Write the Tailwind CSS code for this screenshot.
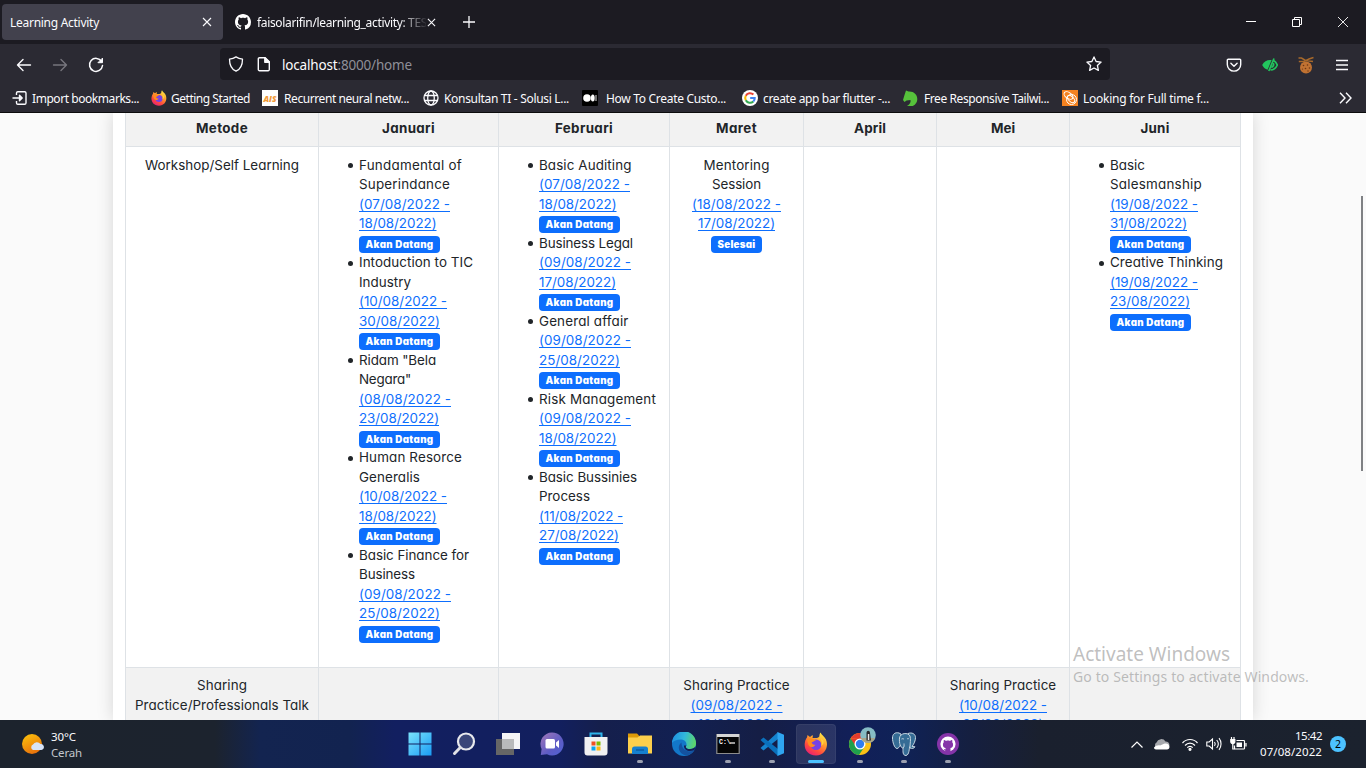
<!DOCTYPE html>
<html lang="id">
<head>
<meta charset="utf-8">
<title>Learning Activity</title>
<script src="https://cdn.jsdelivr.net/npm/@tailwindcss/browser@4"></script>
</head>
<body class="w-[1366px] h-[768px] overflow-hidden flex flex-col bg-[#fafafa] font-['Noto_Sans','Open_Sans',sans-serif] text-[12px] text-[#fbfbfe] whitespace-nowrap">

<!-- tab strip -->
<header class="h-[44px] shrink-0 bg-[#1c1b22] flex items-start pl-[2px]">
  <div class="mt-[4px] w-[221px] h-[36px] rounded-[4px] bg-[#42414d] flex items-center pl-[8px] pr-[11px] justify-between">
    <span class="pt-[1px]" data-w="89">Learning Activity</span>
    <svg class="w-[10px] h-[10px]" viewBox="0 0 10 10" stroke="#fbfbfe" stroke-width="1.1"><path d="M1 1l8 8M9 1l-8 8"/></svg>
  </div>
  <div class="mt-[4px] h-[36px] w-[214px] flex items-center pl-[12px]">
    <svg class="w-[16px] h-[16px] shrink-0" viewBox="0 0 16 16" fill="#fff"><path d="M8 0C3.58 0 0 3.58 0 8c0 3.54 2.29 6.53 5.47 7.59.4.07.55-.17.55-.38 0-.19-.01-.82-.01-1.49-2.01.37-2.53-.49-2.69-.94-.09-.23-.48-.94-.82-1.13-.28-.15-.68-.52-.01-.53.63-.01 1.08.58 1.23.82.72 1.21 1.87.87 2.33.66.07-.52.28-.87.51-1.07-1.78-.2-3.64-.89-3.64-3.95 0-.87.31-1.59.82-2.15-.08-.2-.36-1.02.08-2.12 0 0 .67-.21 2.2.82.64-.18 1.32-.27 2-.27s1.36.09 2 .27c1.53-1.04 2.2-.82 2.2-.82.44 1.1.16 1.92.08 2.12.51.56.82 1.27.82 2.15 0 3.07-1.87 3.75-3.65 3.95.29.25.54.73.54 1.48 0 1.07-.01 1.93-.01 2.2 0 .21.15.46.55.38A8.01 8.01 0 0 0 16 8c0-4.42-3.58-8-8-8z"/></svg>
    <div class="ml-[6px] pt-[1px] w-[169px] overflow-hidden [mask-image:linear-gradient(to_right,#000_142px,transparent_171px)]"><span data-w="170">faisolarifin/learning_activity: TES</span></div>
    <svg class="ml-[1px] w-[9px] h-[9px] shrink-0" viewBox="0 0 10 10" stroke="#fbfbfe" stroke-width="1.2"><path d="M1 1l8 8M9 1l-8 8"/></svg>
  </div>
  <svg class="ml-[26px] mt-[16px] w-[12px] h-[12px]" viewBox="0 0 12 12" stroke="#fbfbfe" stroke-width="1.3"><path d="M6 0v12M0 6h12"/></svg>
  <div class="ml-auto flex items-center h-[44px] pr-[18px] gap-[36px]">
    <svg class="w-[10px] h-[10px]" viewBox="0 0 10 10"><path d="M0 4.5h10" stroke="#fff"/></svg>
    <svg class="w-[10px] h-[10px]" viewBox="0 0 10 10" fill="none" stroke="#fff"><path d="M.5 2.5h7v7h-7zM2.5 2.5v-2h7v7h-2"/></svg>
    <svg class="w-[10px] h-[10px]" viewBox="0 0 10 10" stroke="#fff" stroke-width=".9"><path d="M0 0l10 10M10 0L0 10"/></svg>
  </div>
</header>

<!-- navigation bar -->
<div class="h-[40px] shrink-0 bg-[#2b2a33] flex items-start">
  <svg class="ml-[16px] mt-[13px] w-[16px] h-[16px]" viewBox="0 0 16 16" fill="none" stroke="#fbfbfe" stroke-width="1.4" stroke-linecap="round" stroke-linejoin="round"><path d="M14.500 8H1.500M7 2.500L1.500 8 7 13.500"/></svg>
  <svg class="ml-[20px] mt-[13px] w-[16px] h-[16px]" viewBox="0 0 16 16" fill="none" stroke="#77767e" stroke-width="1.4" stroke-linecap="round" stroke-linejoin="round"><path d="M1.500 8h13M9 2.500L14.500 8 9 13.500"/></svg>
  <svg class="ml-[20px] mt-[13px] w-[16px] h-[16px]" viewBox="0 0 16 16" fill="none" stroke="#fbfbfe" stroke-width="1.5" stroke-linecap="round"><path d="M13.600 4.500A6.500 6.500 0 1 0 14.500 8.500"/><path d="M14.500 1.500v4.200h-4.200z" fill="#fbfbfe" stroke-width="1"/></svg>
  <div class="ml-[116px] mt-[4px] w-[890px] h-[32px] rounded-[4px] bg-[#1c1b22] flex items-center pl-[8px] pr-[8px]">
    <svg class="w-[16px] h-[16px]" viewBox="0 0 16 16" fill="none" stroke="#fbfbfe" stroke-width="1.3" stroke-linejoin="round"><path d="M8 .9c2 1.300 4.300 2 6.500 2.300C14.500 9 12.500 13.200 8 15.200 3.500 13.200 1.500 9 1.500 3.200 3.700 2.900 6 2.200 8 .9z"/></svg>
    <svg class="ml-[12px] w-[16px] h-[16px]" viewBox="0 0 16 16" fill="none" stroke="#fbfbfe" stroke-width="1.4" stroke-linejoin="round"><path d="M3.500 1.700h5.700l4.100 4.100v7.700a1.200 1.200 0 0 1-1.200 1.200H3.500a1.200 1.200 0 0 1-1.200-1.200V2.900a1.200 1.200 0 0 1 1.200-1.200z"/><path d="M8.800 1.700v4.500h4.500z" fill="#fbfbfe"/></svg>
    <span class="ml-[10px] pt-[2px] text-[13.500px]" data-w="130">localhost<span class="text-[#8f8f98]">:8000/home</span></span>
    <svg class="ml-auto w-[16px] h-[16px]" viewBox="0 0 16 16" fill="none" stroke="#fbfbfe" stroke-width="1.3" stroke-linejoin="round"><path d="M8 .9l2.100 4.600 5 .6-3.700 3.400 1 4.900L8 12l-4.400 2.400 1-4.900L.9 6.100l5-.6z"/></svg>
  </div>
  <div class="ml-auto mt-[12px] flex items-center pr-[18px]">
    <svg class="w-[16px] h-[16px]" viewBox="0 0 16 16" fill="none" stroke="#fbfbfe" stroke-width="1.400" stroke-linecap="round" stroke-linejoin="round"><path d="M2.200 2.200h11.600a.9.9 0 0 1 .9.900v4.300a6.700 6.700 0 0 1-13.400 0V3.100a.9.9 0 0 1 .9-.9z"/><path d="M4.900 6.200L8 9.200l3.100-3"/></svg>
    <svg class="ml-[20px] w-[16px] h-[16px]" viewBox="0 0 16 16" fill="none" stroke="#22c55e" stroke-width="1.700"><path d="M.2 8c2-4 5.300-5.400 9.400-4.900L5.600 12.800C3 12 1.200 10.300.2 8z" fill="#22c55e" stroke="none"/><path d="M12 1.500L6.800 14M12 3.800c1.500.8 2.500 2.300 3.300 4.200-1.600 3.400-4 4.900-6.800 5"/><path d="M11.300 6c.8 2 0 3.500-2 4.500"/></svg>
    <svg class="ml-[20px] w-[16px] h-[18px]" viewBox="0 0 16 18"><circle cx="8" cy="11.500" r="6" fill="#c07232"/><g fill="#6d3513"><circle cx="5.500" cy="9.500" r=".8"/><circle cx="9.500" cy="9" r=".8"/><circle cx="11.500" cy="12" r=".8"/><circle cx="7.500" cy="12.500" r=".8"/><circle cx="10" cy="15" r=".7"/><circle cx="4.500" cy="13" r=".6"/></g><path d="M.5 2h3l4 2.500 7.500 1M15.500 1.500L11 3 6 5.500H.8" stroke="#a8692b" stroke-width="1.500" fill="none"/></svg>
    <svg class="ml-[22px] w-[12px] h-[12px]" viewBox="0 0 12 12" stroke="#fbfbfe" stroke-width="1.300"><path d="M0 1.500h12M0 6h12M0 10.500h12"/></svg>
  </div>
</div>

<!-- bookmarks bar -->
<div class="h-[29px] shrink-0 bg-[#2b2a33] border-b border-[#0c0c0d] flex items-center">
  <svg class="ml-[12px] w-[16px] h-[14px]" viewBox="0 0 16 14" fill="none" stroke="#fbfbfe" stroke-width="1.400" stroke-linejoin="round"><path d="M4.500 4V2A1.300 1.300 0 0 1 5.800.8h6.900A1.300 1.300 0 0 1 14 2v10a1.300 1.300 0 0 1-1.300 1.200H5.800A1.300 1.300 0 0 1 4.500 12v-2M.5 7h9M7.500 4.300L10.200 7 7.500 9.700z"/></svg>
  <span class="ml-[4px] pt-[1px]" data-w="107">Import bookmarks...</span>
  <svg class="ml-[12px] w-[16px] h-[16px]" viewBox="0 0 24 24"><use href="#firefox"/></svg>
  <span class="ml-[4px] pt-[1px]" data-w="79">Getting Started</span>
  <svg class="ml-[12px] w-[16px] h-[16px]" viewBox="0 0 16 16"><path d="M0 0h16v16H0z" fill="#fff"/><text x="1.500" y="11.500" font-size="9" font-weight="800" font-style="italic" textLength="13" lengthAdjust="spacingAndGlyphs" fill="#f29a38" font-family="Open Sans">AIS</text></svg>
  <span class="ml-[6px] pt-[1px]" data-w="125">Recurrent neural netw...</span>
  <svg class="ml-[14px] w-[16px] h-[16px]" viewBox="0 0 16 16" fill="none" stroke="#fbfbfe" stroke-width="1.300"><circle cx="8" cy="8" r="7"/><ellipse cx="8" cy="8" rx="3.300" ry="7"/><path d="M1.500 5.500h13M1.500 10.500h13"/></svg>
  <span class="ml-[5px] pt-[1px]" data-w="125">Konsultan TI - Solusi L...</span>
  <svg class="ml-[13px] w-[16px] h-[16px]" viewBox="0 0 16 16"><rect width="16" height="16" rx="1" fill="#000"/><circle cx="5" cy="8" r="3.800" fill="#fff"/><ellipse cx="10.800" cy="8" rx="1.900" ry="3.500" fill="#fff"/><path d="M14 5v6" stroke="#bbb" stroke-width="1.200"/></svg>
  <span class="ml-[8px] pt-[1px]" data-w="120">How To Create Custo...</span>
  <svg class="ml-[16px] w-[16px] h-[16px]" viewBox="0 0 16 16"><circle cx="8" cy="8" r="8" fill="#fff"/><g fill="none" stroke-width="2.100"><path d="M11.400 4.600A4.800 4.800 0 0 0 3.800 5.700" stroke="#ea4335"/><path d="M3.800 5.700a4.800 4.800 0 0 0 0 4.600" stroke="#fbbc05"/><path d="M3.800 10.300a4.800 4.800 0 0 0 7.500 1.200" stroke="#34a853"/><path d="M11.300 11.500A4.600 4.600 0 0 0 12.700 8H8.200" stroke="#4285f4"/></g></svg>
  <span class="ml-[5px] pt-[1px]" data-w="127">create app bar flutter -...</span>
  <svg class="ml-[13px] w-[15px] h-[16px]" viewBox="0 0 15 16" fill="#56c13b"><path d="M3 .5L5.500 1.500C10.500 1 14.300 4.500 14.300 9c0 3-1.500 5.500-4.500 7H4c2.800-1.800 4-3.500 3.500-6L3.500 10.500 1.500 12 0 10 1.500 5z"/></svg>
  <span class="ml-[6px] pt-[1px]" data-w="125">Free Responsive Tailwi...</span>
  <svg class="ml-[13px] w-[16px] h-[16px]" viewBox="0 0 16 16" fill="none" stroke="#fff" stroke-width="1"><path d="M0 0h16v16H0z" fill="#f58220" stroke="none"/><circle cx="9.500" cy="9.500" r="5"/><ellipse cx="6.500" cy="5.500" rx="5" ry="3" transform="rotate(35 6.500 5.500)"/><ellipse cx="9" cy="9" rx="4.500" ry="2.500" transform="rotate(45 9 9)"/></svg>
  <span class="ml-[5px] pt-[1px]" data-w="126">Looking for Full time f...</span>
  <svg class="ml-auto mr-[14px] w-[13px] h-[12px]" viewBox="0 0 13 12" fill="none" stroke="#fbfbfe" stroke-width="1.400"><path d="M1 .8L6 6l-5 5.200M7 .8L12 6l-5 5.200"/></svg>
</div>

<!-- page -->
<main class="relative h-[607px] shrink-0 overflow-hidden pl-[113px] text-[#212529] font-['Inter',sans-serif] [font-feature-settings:'cv11'] text-[13.400px] leading-[19.5px]">
  <div class="w-[1140px] h-full bg-white pl-[12px] shadow-[0_0_16px_rgba(0,0,0,0.15)]">
    <div id="table" class="w-[1116px] border-l border-[#dee2e6] grid grid-cols-[193px_180px_171px_134px_133px_133px_171px] grid-rows-[34px_521px_70px]"></div>
  </div>
  <div class="absolute left-[1361px] top-[83px] w-[2px] h-[275px] bg-[#7f8184]"></div>
  <div class="absolute left-[1073px] top-[529px] font-['Noto_Sans',sans-serif] text-[#8a8a8a]/55">
    <div class="text-[19px] leading-[25px]"><span data-w="157">Activate Windows</span></div>
    <div class="text-[14px] leading-[20px]"><span data-w="236">Go to Settings to activate Windows.</span></div>
  </div>
</main>

<!-- taskbar -->
<footer class="h-[48px] shrink-0 flex items-center bg-[linear-gradient(to_right,#1c232d_0px,#1c232e_215px,#132450_260px,#122350_350px,#121f60_395px,#121f5e_560px,#151f4c_600px,#122052_680px,#151e45_760px,#121f58_850px,#0f2257_900px,#151f40_970px,#1a202e_1040px,#1b222e_1366px)]">
  <svg class="ml-[21px] w-[24px] h-[24px]" viewBox="0 0 24 24"><defs><linearGradient id="sun" x1="0" y1="0" x2=".5" y2="1"><stop stop-color="#fdc60b"/><stop offset="1" stop-color="#e8730c"/></linearGradient></defs><circle cx="11" cy="12" r="10" fill="url(#sun)"/><path d="M12 18a3 3 0 0 1 0-5.500 4.500 4.500 0 0 1 7.500-.5 3 3 0 0 1 .8 6z" fill="#d8e4f8"/></svg>
  <div class="ml-[6px] mt-[2px] w-[60px] leading-[16px] text-[11.500px]">
    <div><span data-w="25">30°C</span></div>
    <div class="text-[#c3c7cc]"><span data-w="31">Cerah</span></div>
  </div>
  <div class="ml-[287px] h-[48px] grid grid-cols-[repeat(13,44px)] items-center justify-items-center">
    <svg class="w-[24px] h-[24px]" viewBox="0 0 24 24"><defs><linearGradient id="win" x1="0" y1="0" x2="1" y2="1"><stop stop-color="#7be3fc"/><stop offset="1" stop-color="#1a9cf5"/></linearGradient></defs><path d="M.5.5H11.500V11.500H.5zM12.500.5h11v11h-11zM.5 12.500h11v11H.5zM12.500 12.500h11v11h-11z" fill="url(#win)"/></svg>
    <svg class="w-[24px] h-[24px]" viewBox="0 0 24 24"><circle cx="14" cy="9.500" r="8" fill="#3a4679" stroke="#e8e9ed" stroke-width="2.200"/><path d="M8.300 15.500L2.500 21.500" stroke="#e0e1e6" stroke-width="3" stroke-linecap="round"/></svg>
    <svg class="w-[24px] h-[24px]" viewBox="0 0 24 24"><path d="M6 1h18v16H6z" fill="#f4f4f5"/><path d="M0 7h18v16H0z" fill="#666" /><path d="M6 7h12v10H6z" fill="#b9babb"/></svg>
    <svg class="w-[24px] h-[24px]" viewBox="0 0 24 24"><defs><linearGradient id="chat" x1="0" y1="0" x2="1" y2="1"><stop stop-color="#a277b8"/><stop offset=".6" stop-color="#5d5cc5"/><stop offset="1" stop-color="#4f63d6"/></linearGradient></defs><path d="M12 .5a11.500 11.500 0 1 1-5 21.800L.8 23l.8-6A11.500 11.500 0 0 1 12 .5z" fill="url(#chat)"/><rect x="5.500" y="7" width="9.500" height="9.500" rx="1.500" fill="#fff"/><path d="M16 10.500l3-2.500v8l-3-2.500z" fill="#fff"/></svg>
    <svg class="w-[24px] h-[24px]" viewBox="0 0 24 24"><path d="M6.500 6V1.500h11V6" fill="none" stroke="#2fb3ea" stroke-width="2"/><path d="M.5 5h23v15.500a3 3 0 0 1-3 3h-17a3 3 0 0 1-3-3z" fill="#f1f1f2"/><path d="M7.500 9.500h4v4h-4z" fill="#f05022"/><path d="M12.500 9.500h4v4h-4z" fill="#7fba00"/><path d="M7.500 14.500h4v4h-4z" fill="#0aa3ee"/><path d="M12.500 14.500h4v4h-4z" fill="#fdb813"/></svg>
    <div class="relative w-[24px] h-[24px]"><svg class="w-[24px] h-[24px]" viewBox="0 0 24 24"><path d="M0 1.500h9l2 2v3H0z" fill="#dd9a08"/><path d="M0 5.500h9.500l2.500-2h12v18H0z" fill="#fccf4c"/><path d="M4 22v-5a2.500 2.500 0 0 1 2.500-2.500h11A2.500 2.500 0 0 1 20 17v5z" fill="#1680d0"/><path d="M8 18h8" stroke="#0c5da4" stroke-width="1.500"/></svg><i class="absolute left-[9px] top-[28px] w-[6px] h-[3px] rounded-full bg-[#9ba0b0]"></i></div>
    <svg class="w-[24px] h-[24px]" viewBox="0 0 24 24"><defs><linearGradient id="edge" x1="0" y1=".3" x2="1" y2=".5"><stop stop-color="#1e8fe0"/><stop offset=".5" stop-color="#31b7dc"/><stop offset="1" stop-color="#5ed668"/></linearGradient></defs><circle cx="12" cy="12" r="12" fill="#1377c9"/><path d="M0 11A12 12 0 0 1 24 11.500c0 4-3 5.500-6 5.500-4 0-5-2-3.500-3.500C15 9.500 12 7.500 8.500 7.500 4.500 7.500 1.500 9 0 11z" fill="url(#edge)"/><path d="M9.500 10.500c-5 3-3 12 5 13 4-.8 6.500-3 8-5.500-5 3-13 1-13-7.500z" fill="#1452a0"/><path d="M14.500 13.500c-1.500 1.500-.5 3.500 3.500 3.500 2.500 0 4.500-1 5.500-2.500l-1 3.500c-5 2.500-11 .5-10.500-4.500z" fill="#131f56"/></svg>
    <div class="relative w-[24px] h-[24px]"><svg class="w-[24px] h-[24px]" viewBox="0 0 24 24"><path d="M.8 2.500h22.400v19H.8z" fill="#050505" stroke="#8c8c8c" stroke-width="1.200"/><path d="M1 2h22v3H1z" fill="#d5d5d5"/><text x="3" y="11.500" font-size="6.500" font-weight="700" fill="#fff" font-family="Liberation Mono">C:\</text><path d="M14 11h5" stroke="#fff" stroke-width="1.200"/></svg><i class="absolute left-[9px] top-[28px] w-[6px] h-[3px] rounded-full bg-[#9ba0b0]"></i></div>
    <div class="relative w-[24px] h-[24px]"><svg class="w-[24px] h-[24px]" viewBox="0 0 24 24"><path d="M18 0v7L3.500 18.500.5 16z" fill="#1583cf"/><path d="M.5 8l3-2.500L18 17v7z" fill="#0a70bc"/><path d="M17.500 0L24 2.700v18.600L17.500 24z" fill="#2fa5f0"/></svg><i class="absolute left-[9px] top-[28px] w-[6px] h-[3px] rounded-full bg-[#9ba0b0]"></i></div>
    <div class="relative w-[40px] h-[40px] rounded-[4px] bg-white/10 border border-white/5 flex items-center justify-center"><svg class="w-[24px] h-[24px]" viewBox="0 0 24 24"><defs><linearGradient id="fox" x1=".8" y1="0" x2=".2" y2="1"><stop stop-color="#fff04a"/><stop offset=".35" stop-color="#ffa22d"/><stop offset=".7" stop-color="#ff4a3e"/><stop offset="1" stop-color="#e51a7c"/></linearGradient>
      <g id="firefox"><path d="M16.500.5c1 2.500 4 4 5.500 7 3 7-1 16-10 16S-.5 16 1 10c.3-2 1.200-3.500 2-4.500L3.500 3l2.500 2c1-1 2-1.500 3-1.700L8.500 6h2.800c2 0 3-.5 4-1.500C15.500 3 15.500 2 16.500.5z" fill="url(#fox)"/><circle cx="12" cy="12.800" r="5.300" fill="#7542e5"/><path d="M3 8c3-3 7-1 9 .5-2 .3-3 1.500-4.500 2 1 2 2.500 2.500 4 2.300-2 3-5 3-7 .2z" fill="#ff8a1f"/><path d="M16 6c2.500 3 2 6 1 8 2-1 3-3 2.500-5z" fill="#ffd43a"/></g></defs><use href="#firefox"/></svg><i class="absolute left-[11px] top-[35px] w-[16px] h-[3px] rounded-full bg-[#4cc2ff]"></i></div>
    <div class="relative w-[24px] h-[24px]"><svg class="w-[28px] h-[30px] absolute left-0 -top-[6px]" viewBox="0 0 28 30"><circle cx="12" cy="18" r="11" fill="#fbc116"/><path d="M12 18L2.500 12.500A11 11 0 0 0 11 29l6-9z" fill="#1fa04d"/><path d="M2.500 12.500A11 11 0 0 1 21.500 12.500L12 13z" fill="#e33b2e"/><path d="M2.500 12.500l5.500 8 4-7.500z" fill="#e33b2e"/><circle cx="12" cy="18" r="5.500" fill="#fff"/><circle cx="12" cy="18" r="4.200" fill="#2f7df0"/><circle cx="20" cy="9" r="7.800" fill="#86bcc4"/><path d="M12.700 12a7.800 7.800 0 0 0 14.600 0z" fill="#a8a58a"/><path d="M18.500 14.500V7c0-3 3.500-3 3.500 0l1 7.500z" fill="#27282c"/><path d="M19.800 8v6h1.500V8z" fill="#e9e9e9"/></svg><i class="absolute left-[9px] top-[28px] w-[6px] h-[3px] rounded-full bg-[#9ba0b0]"></i></div>
    <div class="relative w-[24px] h-[24px]"><svg class="w-[24px] h-[24px]" viewBox="0 0 24 24" fill="#356c95" stroke="#c9d7e2" stroke-width="1"><path d="M7 1C3 0 .5 2 .5 6c0 4 2 10.500 4.500 10.500 1.500 0 2-1.500 3.500-3.500L9 2z"/><path d="M16 1.500C20 0 23.500 2 23.500 5.500c0 3-1.500 6.500-3.500 9l3 .3c-1 1.700-3 2-5 1.200z"/><path d="M7.500 6C8 1 16 0 18 4c1 3 0 8 0 10-1 2-.5 9-4 9.500-3.500 0-3-4-3-7.500C8.500 16 7 11 7.500 6z"/><path d="M9.500 7c1-.5 2-.3 2.500.3M15 7c.7-.5 1.500-.5 2 0M11 16c1.500-1 1-3 1-4.500" fill="none"/></svg><i class="absolute left-[9px] top-[28px] w-[6px] h-[3px] rounded-full bg-[#9ba0b0]"></i></div>
    <div class="relative w-[24px] h-[24px]"><svg class="w-[24px] h-[24px]" viewBox="0 0 24 24"><circle cx="12" cy="12" r="11" fill="#8534a8"/><circle cx="12" cy="12" r="7.600" fill="#fff"/><path d="M9.800 20v-3c-1.500.4-2.500 0-3-1.200M9.500 16C7 15.500 6.800 13.500 7 12c0-.8.300-1.300.8-1.800-.3-.8-.2-1.500.1-2.200.8 0 1.500.4 2.100.9 1.300-.4 2.700-.4 4 0 .6-.5 1.300-.9 2.100-.9.300.7.4 1.400.1 2.200.5.500.8 1 .8 1.800.2 1.500 0 3.500-2.500 4v4h-4.700z" fill="#8534a8"/></svg><i class="absolute left-[9px] top-[28px] w-[6px] h-[3px] rounded-full bg-[#9ba0b0]"></i></div>
  </div>
  <div class="ml-auto flex items-center pr-[19px]">
    <svg class="w-[12px] h-[7px]" viewBox="0 0 12 7" fill="none" stroke="#fff" stroke-width="1.200"><path d="M.5 6.500L6 1l5.500 5.500"/></svg>
    <svg class="ml-[10px] w-[17px] h-[12px]" viewBox="0 0 17 12"><path d="M4 10a3 3 0 0 1-.5-5.500A5 5 0 0 1 12.500 3.500c2.500 0 4 1.500 4 4z" fill="#a6a8ad"/><path d="M1 9.500C2.500 8 5 7 7 7.500l4-1.800c3-1 5.500.8 5.500 3 0 1.800-1 2.800-2.500 2.800H3C1.800 11.500 1 10.800 1 9.500z" fill="#fff"/></svg>
    <svg class="ml-[12px] w-[16px] h-[13px]" viewBox="0 0 16 13" fill="none" stroke="#fff" stroke-width="1.200"><path d="M.5 5C4.500.3 11.500.3 15.500 5M3 7.500c2.800-3.200 7.200-3.200 10 0M5.300 9.700c1.600-1.800 3.800-1.800 5.400 0"/><circle cx="8" cy="11.300" r="1" fill="#fff"/></svg>
    <svg class="ml-[8px] w-[16px] h-[14px]" viewBox="0 0 16 14" fill="none" stroke="#fff" stroke-width="1.100"><path d="M.8 5v4h2.400L6.500 12V2L3.200 5zM8.500 5c.9 1.200.9 2.800 0 4M10.700 3c1.900 2.300 1.900 5.700 0 8M13 1.200c2.700 3.300 2.700 8.300 0 11.600"/></svg>
    <svg class="ml-[8px] w-[17px] h-[14px]" viewBox="0 0 17 14" fill="none" stroke="#fff" stroke-width="1.200"><path d="M6.500 3.500h7.200a.8.800 0 0 1 .8.800v6.900a.8.800 0 0 1-.8.800H5.300a.8.800 0 0 1-.8-.8V8.500M16 6v3.500"/><path d="M6.500 5.500h5.500v4.500H6.500z" fill="#fff" stroke="none"/><path d="M.8 2.500h4v2.200a2 2 0 0 1-4 0z" fill="#fff"/><path d="M1.500 0v2.500M4 0v2.500M2.800 6v6h2"/></svg>
    <div class="ml-[13px] w-[62px] text-right leading-[16px] text-[11.500px]">
      <div><span data-w="27">15:42</span></div>
      <div><span data-w="62">07/08/2022</span></div>
    </div>
    <div class="ml-[8px] mr-px w-[16px] h-[16px] rounded-full bg-[#4cc2ff] text-black text-[10.500px] leading-[16px] text-center">2</div>
  </div>
</footer>

<script>
  // Lines are [text, width in px]; dates start with "(" or a digit and are links.
  const D = { '07': 91, '08': 92, '09': 92, '10': 88, '11': 84, '18': 89, '19': 88 };
  const E = { '17': 77, '18': 77.500, '23': 80, '25': 81, '27': 80, '30': 81, '31': 77 };
  const dates = (a, b) => [[`(${a}/08/2022 -`, D[a]], [`${b}/08/2022)`, E[b]]];
  const line = ([t, w]) => /^[(\d]/.test(t)
    ? `<div class="h-[19.5px]"><a class="text-[#0d6efd] underline underline-offset-[2px] decoration-1" data-w="${w}">${t}</a></div>`
    : `<div class="h-[19.5px]"><span data-w="${w}">${t}</span></div>`;
  const badge = (t, w) => `<div class="h-[19.5px] pt-[2.2px]"><span class="inline-block h-[17px] rounded-[4px] bg-[#0d6efd] px-[6.500px] text-white text-[9.750px] leading-[17px] font-black align-top"><span data-w="${w}">${t}</span></span></div>`;
  const li = (lines, a, b) => `<li class="relative before:absolute before:left-[-11.5px] before:top-[7.5px] before:size-[5px] before:rounded-full before:bg-[#212529]">${lines.map(line).join('')}${dates(a, b).map(line).join('')}${badge('Akan Datang', 68)}</li>`;
  const ul = (items) => `<ul class="list-none pl-[32px] text-left mb-4">${items.join('')}</ul>`;
  const head = [['Metode', 52], ['Januari', 53], ['Februari', 58], ['Maret', 41], ['April', 32], ['Mei', 24], ['Juni', 29]]
    .map(([t, w]) => `<div class="border-r border-b border-[#dee2e6] bg-[#f2f2f2] text-center font-bold pt-[6px]"><span data-w="${w}">${t}</span></div>`);
  const white = (c) => `<div class="border-r border-b border-[#dee2e6] px-2 pt-[8.5px] text-center">${c}</div>`;
  const gray = (c) => `<div class="border-r border-[#dee2e6] bg-[#f2f2f2] p-2 text-center">${c}</div>`;
  const row1 = [
    line(['Workshop/Self Learning', 154]),
    ul([
      li([['Fundamental of', 103], ['Superindance', 91]], '07', '18'),
      li([['Intoduction to TIC', 114], ['Industry', 52]], '10', '30'),
      li([['Ridam "Bela', 77], ['Negara"', 52]], '08', '23'),
      li([['Human Resorce', 103], ['Generalis', 61]], '10', '18'),
      li([['Basic Finance for', 110], ['Business', 56]], '09', '25')]),
    ul([
      li([['Basic Auditing', 92.500]], '07', '18'),
      li([['Business Legal', 94]], '09', '17'),
      li([['General affair', 89.500]], '09', '25'),
      li([['Risk Management', 117]], '09', '18'),
      li([['Basic Bussinies', 98], ['Process', 51]], '11', '27')]),
    [['Mentoring', 66], ['Session', 49], ...dates('18', '17')].map(line).join('') + badge('Selesai', 38),
    '', '',
    ul([
      li([['Basic', 35], ['Salesmanship', 92]], '19', '31'),
      li([['Creative Thinking', 113]], '19', '23')])
  ].map(white);
  const row2 = [
    line(['Sharing', 50]) + line(['Practice/Professionals Talk', 174]), '', '',
    [['Sharing Practice', 106.500], ...dates('09', '18')].map(line).join(''), '',
    [['Sharing Practice', 106.500], ...dates('10', '25')].map(line).join(''), ''
  ].map(gray);
  document.getElementById('table').innerHTML = head.concat(row1, row2).join('');

  // Spread the letters of each label over its set width.
  // Runs again whenever styles or fonts arrive and change the layout.
  const labels = [...document.querySelectorAll('[data-w]')];
  const fit = () => {
    labels.forEach((el) => { el.style.letterSpacing = '0px'; });
    const widths = labels.map((el) => el.getBoundingClientRect().width);
    labels.forEach((el, i) => {
      el.style.letterSpacing = ((+el.dataset.w - widths[i]) / el.textContent.length) + 'px';
    });
  };
  fit();
  addEventListener('load', fit);
  document.fonts.ready.then(fit);
  new ResizeObserver(fit).observe(document.body);
  new ResizeObserver(fit).observe(document.getElementById('table'));
  [50, 150, 300].forEach((ms) => setTimeout(fit, ms));
</script>
</body>
</html>
